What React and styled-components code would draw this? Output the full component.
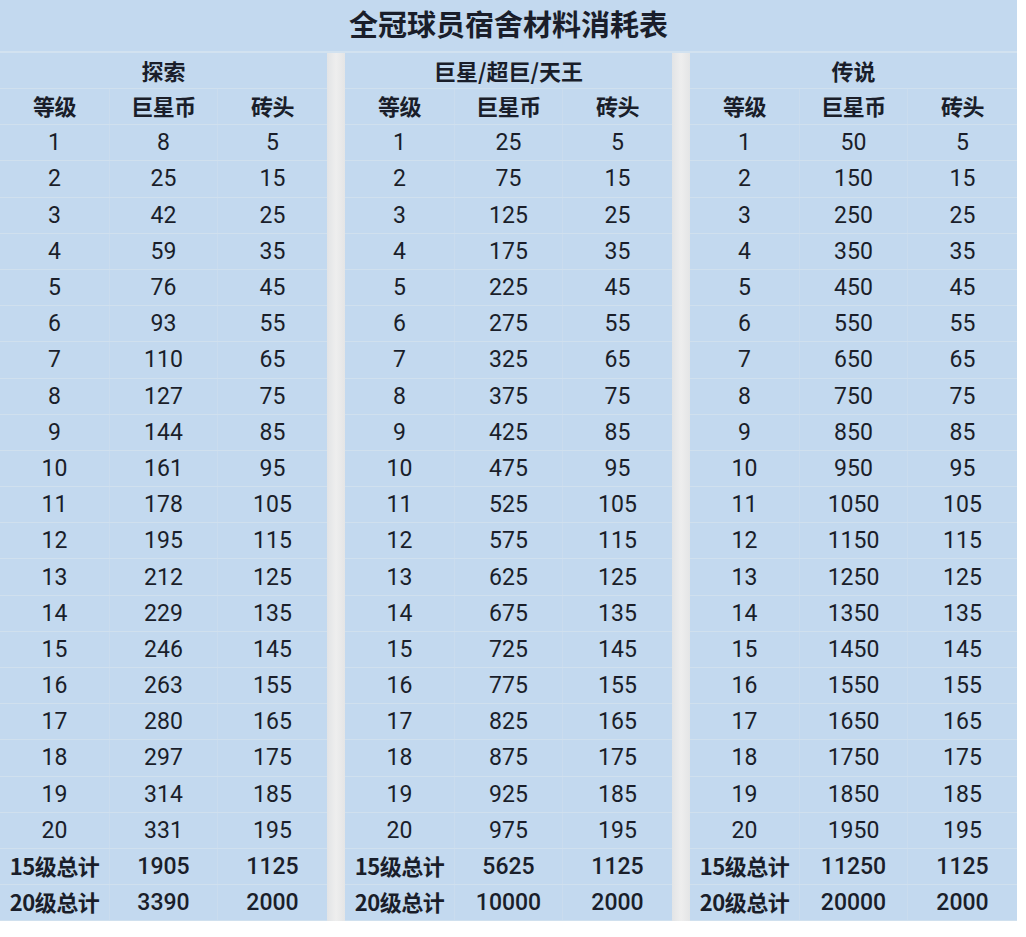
import React from 'react';
import styled, { createGlobalStyle } from 'styled-components';

const GlobalStyle = createGlobalStyle`
  body {
    margin: 0;
    background: #ffffff;
    font-family: Roboto, "Noto Sans CJK SC", sans-serif;
  }
`;

const groups = [
  { name: '探索', coins: [8, 25, 42, 59, 76, 93, 110, 127, 144, 161, 178, 195, 212, 229, 246, 263, 280, 297, 314, 331], total15: 1905, total20: 3390 },
  { name: '巨星/超巨/天王', coins: Array.from({ length: 20 }, (_, i) => 25 + i * 50), total15: 5625, total20: 10000 },
  { name: '传说', coins: Array.from({ length: 20 }, (_, i) => 50 + i * 100), total15: 11250, total20: 20000 },
];

const bricks = Array.from({ length: 20 }, (_, i) => 5 + i * 10);

function Panel({ group }) {
  return (
    <PanelBox>
      <GroupTitle>{group.name}</GroupTitle>
      <Row>
        <Cell head>等级</Cell>
        <Cell head>巨星币</Cell>
        <Cell head>砖头</Cell>
      </Row>
      {group.coins.map((c, i) => (
        <Row key={i}>
          <Cell>{i + 1}</Cell>
          <Cell>{c}</Cell>
          <Cell>{bricks[i]}</Cell>
        </Row>
      ))}
      <Row>
        <Cell head>15级总计</Cell>
        <Cell bold>{group.total15}</Cell>
        <Cell bold>1125</Cell>
      </Row>
      <Row>
        <Cell head>20级总计</Cell>
        <Cell bold>{group.total20}</Cell>
        <Cell bold>2000</Cell>
      </Row>
    </PanelBox>
  );
}

export default function App() {
  return (
    <>
      <GlobalStyle />
      <Sheet>
        <Title>全冠球员宿舍材料消耗表</Title>
        <Panels>
          <Panel group={groups[0]} />
          <Divider />
          <Panel group={groups[1]} />
          <Divider />
          <Panel group={groups[2]} />
        </Panels>
      </Sheet>
    </>
  );
}

const Sheet = styled.div`
  width: 1017px;
  background: #c3d9ef;
  color: #1a1e2a;
`;

const Title = styled.div`
  height: 53px;
  display: flex;
  align-items: center;
  justify-content: center;
  padding-bottom: 6px;
  box-sizing: border-box;
  font-family: "Noto Sans CJK SC", sans-serif;
  font-size: 29px;
  font-weight: 700;
  border-bottom: 2px solid #d2e2f0;
`;

const Panels = styled.div`
  display: flex;
`;

const Divider = styled.div`
  width: 18px;
  background: linear-gradient(90deg, #e2e4e6 0%, #eeeeee 50%, #e4e5e6 100%);
`;

const PanelBox = styled.div`
  width: 327px;
  display: flex;
  flex-direction: column;
`;

const GroupTitle = styled.div`
  height: 36px;
  display: flex;
  align-items: center;
  justify-content: center;
  padding-bottom: 2px;
  box-sizing: border-box;
  font-family: "Noto Sans CJK SC", sans-serif;
  font-size: 22px;
  font-weight: 700;
  border-bottom: 1px solid #d0e0ee;
`;

const Row = styled.div`
  height: 36.2px;
  display: grid;
  grid-template-columns: 110px 108px 109px;
  border-bottom: 1px solid #d0e0ee;
  box-sizing: border-box;
`;

const Cell = styled.div`
  display: flex;
  align-items: center;
  justify-content: center;
  font-family: ${(p) => (p.head ? '"Noto Sans CJK SC", sans-serif' : 'Roboto, sans-serif')};
  font-size: ${(p) => (p.head ? '22px' : '23px')};
  font-weight: ${(p) => (p.head ? 700 : p.bold ? 500 : 400)};
  padding-bottom: ${(p) => (p.head ? '3px' : '0')};
  white-space: nowrap;
  letter-spacing: ${(p) => (p.head ? '-0.5px' : '0')};
  border-right: 1px solid #cadcee;
  &:last-child {
    border-right: none;
  }
`;
